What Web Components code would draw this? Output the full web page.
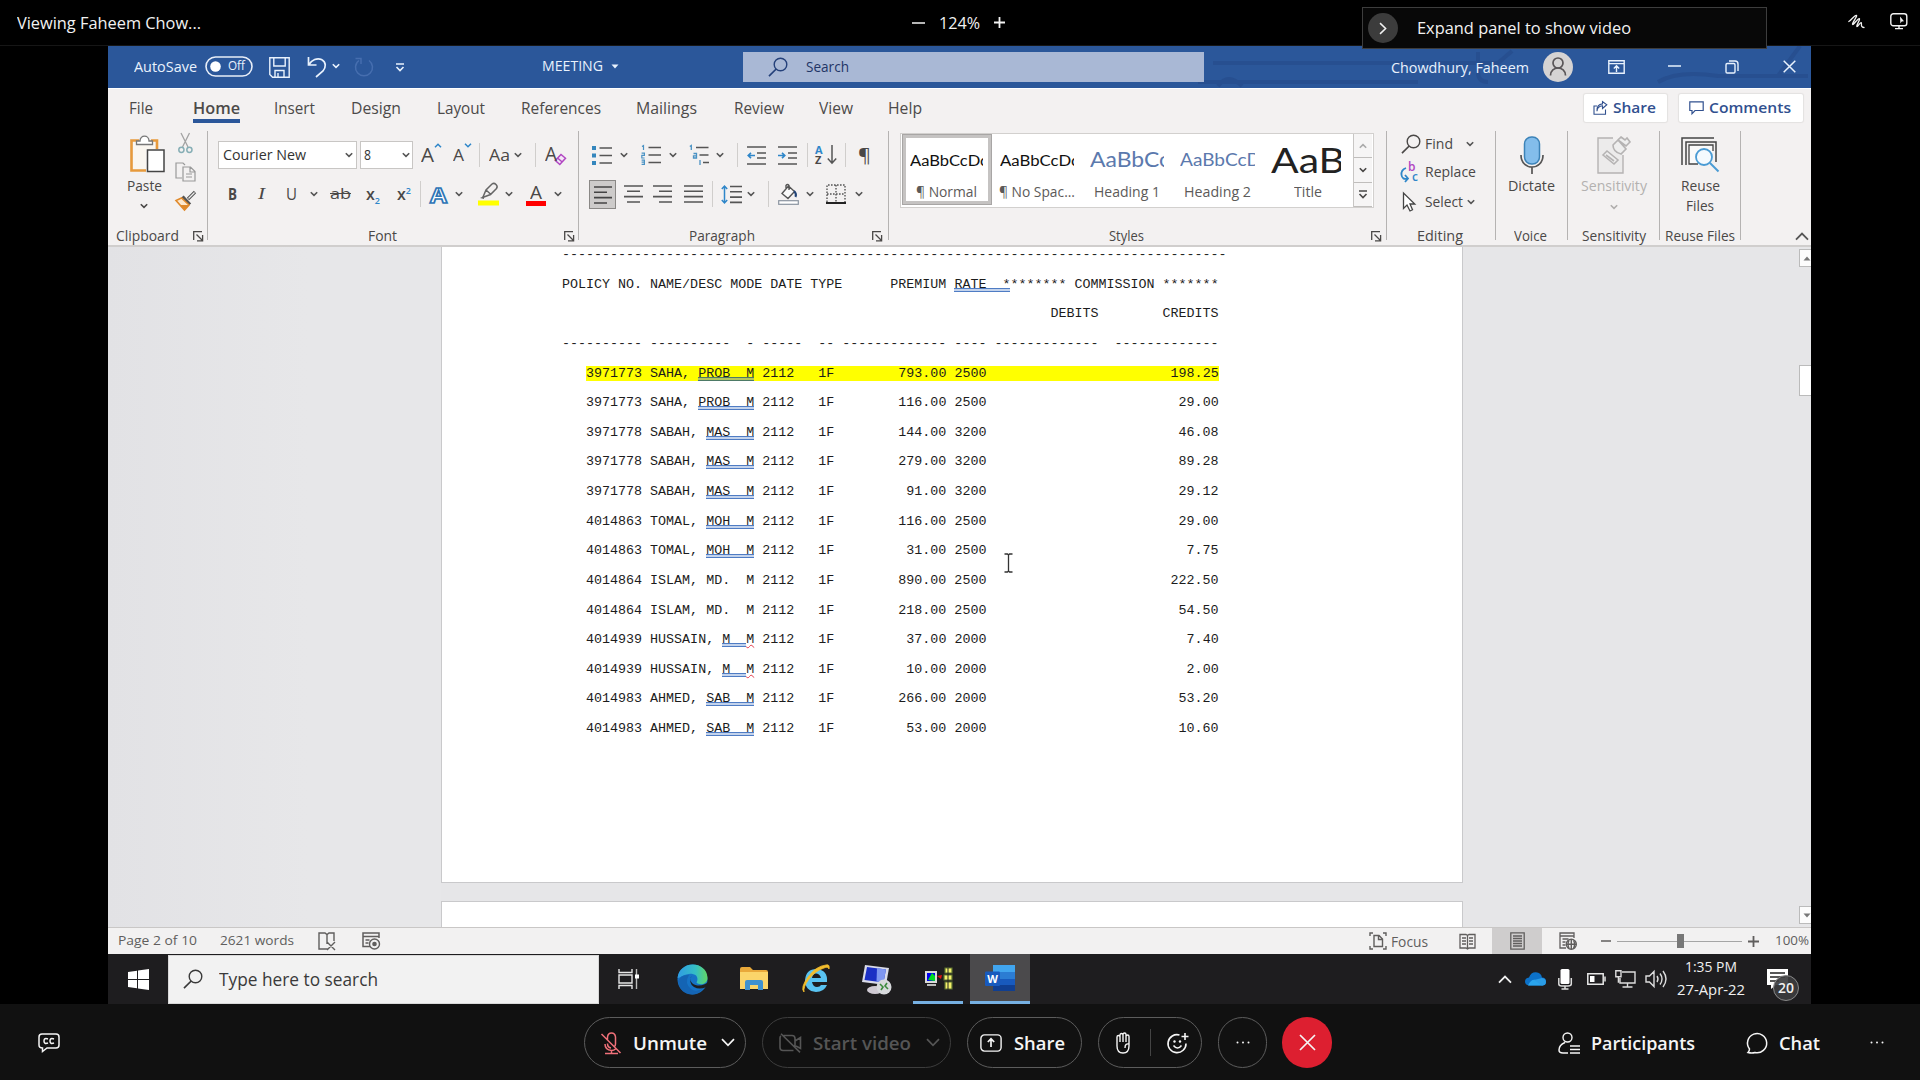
<!DOCTYPE html>
<html lang="en">
<head>
<meta charset="utf-8">
<title>Meeting</title>
<style>
html,body{margin:0;padding:0;background:#000;width:1920px;height:1080px;overflow:hidden}
body{font-family:"Open Sans","Noto Sans",sans-serif}
</style>
</head>
<body>
<meeting-app></meeting-app>
<script>
/* Text run whose glyphs are condensed or expanded to a given width */
class FitText extends HTMLElement{
  connectedCallback(){
    if(this.shadowRoot)return;
    const w=+this.getAttribute('w');
    const r=this.attachShadow({mode:'open'});
    r.innerHTML=`<style>:host{display:block;width:${w}px;flex:none;white-space:pre;line-height:1.3}
      span{display:inline-block;transform-origin:0 50%;white-space:pre}</style><span><slot></slot></span>`;
    const s=r.querySelector('span'),n=s.getBoundingClientRect().width;
    if(n>0)s.style.transform=`scaleX(${w/n})`;
  }
}
customElements.define('fit-text',FitText);

const S='fill="none" stroke="currentColor" stroke-width="1.4"';
const ICONS={
chev:[8,6,`<path d="M.8 1.2 4 4.4 7.2 1.2" fill="none" stroke="currentColor" stroke-width="1.6"/>`],
chevBig:[14,9,`<path d="M1 1.2 7 7.4 13 1.2" fill="none" stroke="currentColor" stroke-width="1.7"/>`],
up:[14,9,`<path d="M1 7.6 7 1.6 13 7.6" fill="none" stroke="currentColor" stroke-width="1.8"/>`],
launch:[11,11,`<path d="M.7 9V.7H9M3.5 3.5 9 9M9.6 4v5.8H4" fill="none" stroke="currentColor" stroke-width="1.3"/>`],
scribble:[17,16,`<path d="M.8 7.500C3.500 6 6.500 1 8.300 1.300S4 8.800 4.500 10.300 10 4 11.300 4.600 8.300 11 8.800 12.300 12.300 8 13.200 8.600 12 13.500 16 13.500" fill="none" stroke="currentColor" stroke-width="1.300" stroke-linecap="round"/>`],
screen:[18,17,`<rect x=".8" y=".8" width="16" height="12" rx="2.6" ${S}/><path d="M5 15.6h8M9 13v3" ${S}/><path d="M10 3.500l4 4.800-2.300.2L10.400 10.500z" fill="currentColor"/>`],
toggle:[48,21,`<rect x="1" y="1" width="46" height="19" rx="9.500" fill="none" stroke="#e8eef8" stroke-width="1.6"/><circle cx="10.500" cy="10.500" r="5.300" fill="#fff"/>`],
save:[21,21,`<path d="M.8.8h19.400v19.400H3.600L.8 17.400zM4.800.8v8.200h11.400V.8M6 20v-6.500h9V20M9 20v-4" ${S}/>`],
undo:[20,22,`<path d="M1.500 1v8h8M2 8.500C5 4 10 1.500 14.500 3.500c5 2.500 4.500 8 1.500 11.500L9 21" fill="none" stroke="currentColor" stroke-width="1.700"/>`],
redo:[20,21,`<path d="M5 3.500A8.500 8.500 0 1 0 15 3.500M1.500 1.500H7V7" fill="none" stroke="currentColor" stroke-width="1.500"/>`],
custom:[10,9,`<path d="M1 1h8M1.500 4l3.500 3.500L8.500 4" fill="none" stroke="currentColor" stroke-width="1.600"/>`],
caret:[8,5,`<path d="M.5.5h7L4 4.500z" fill="currentColor"/>`],
mag:[20,20,`<circle cx="12.500" cy="7.500" r="6.300" ${S}/><path d="M8.200 12 1 19.200" fill="none" stroke="currentColor" stroke-width="1.700"/>`],
avatar:[30,30,`<circle cx="15" cy="15" r="15" fill="#d5d3d3"/><circle cx="15" cy="11" r="5" fill="none" stroke="#5a5658" stroke-width="1.700"/><path d="M7.500 23.500c0-10 15-10 15 0" fill="none" stroke="#5a5658" stroke-width="1.700"/>`],
ribopt:[17,14,`<path d="M.8.8h15.400v12.400H.8zM.8 3.600h15.400M8.500 12V6M5.800 8.400l2.700-2.600 2.700 2.600" ${S}/>`],
min:[13,2,`<path d="M0 1h13" stroke="currentColor" stroke-width="1.500"/>`],
restore:[14,14,`<rect x="1" y="3.500" width="9" height="9.500" rx="1.200" ${S}/><path d="M4 1h6q3 0 3 3v7" ${S}/>`],
close:[13,13,`<path d="M.7.7l11.600 11.600M12.300.7.7 12.300" fill="none" stroke="currentColor" stroke-width="1.500"/>`],
closeBig:[17,17,`<path d="M1 1l15 15M16 1 1 16" fill="none" stroke="currentColor" stroke-width="1.700"/>`],
share:[15,14,`<path d="M4 5H1v8.300h11.500V8.500M4 10.200C4.300 6.600 6.500 5 9.500 4.800V7.500L13.800 3.700 9.500.6v2.300C5 3.200 3.800 6.600 4 10.200z" fill="none" stroke="currentColor" stroke-width="1.100"/>`],
comment:[15,14,`<path d="M.8.8h13.400v8.700H6l-3 3.300V9.500H.8z" fill="none" stroke="currentColor" stroke-width="1.200"/>`],
paste:[36,38,`<path d="M9 5.500H1.500v30H16M21 5.500h6V14" fill="none" stroke="#e79a3c" stroke-width="2.600"/><path d="M3 7h22v7h-9v20H3z" fill="#faf6f0"/><path d="M6.500 9.500V6H10C10 -.5 19 -.5 19 6h3.500v3.500z" fill="#fff" stroke="#777" stroke-width="1.300"/><rect x="17.500" y="15" width="16.500" height="21.500" fill="#fff" stroke="#444" stroke-width="1.500"/>`],
cut:[15,22,`<path d="M3 1l7 14M11.500 1 4.500 15" stroke="#a3a3a3" stroke-width="1.300" fill="none"/><circle cx="3.400" cy="17.800" r="2.600" fill="none" stroke="#86aeb5" stroke-width="1.500"/><circle cx="11.400" cy="17.800" r="2.600" fill="none" stroke="#86aeb5" stroke-width="1.500"/>`],
copy:[21,20,`<path d="M7 16H1V1h7l2 2M8 5h7.500L20 9.500V19H8zM15 5v5h5M11 12h6M11 15h6" fill="none" stroke="#999" stroke-width="1.200"/>`],
brush:[21,20,`<path d="M20 1l-7 7M7.500 5.500l7.500 8" stroke="#555" stroke-width="3.200"/><path d="M19.500 1.500l-6 6" stroke="#eee" stroke-width="1.200"/><path d="M6.500 7 1 9.500l8.500 9.500 4.500-5z" fill="#fde9cf" stroke="#e08a2c" stroke-width="1.600"/><path d="M5 14l4.500 5L14 14z" fill="#e08a2c"/>`],
grow:[8,5,`<path d="M1 4.200l3-3 3 3" fill="none" stroke="#2e86c9" stroke-width="1.500"/>`],
shrink:[8,5,`<path d="M1 .8l3 3 3-3" fill="none" stroke="#2e86c9" stroke-width="1.500"/>`],
eraser:[13,13,`<path d="M1.300 7.500 7 1.500l4.500 3.800-5.700 6.200zM3.500 5l4.700 4" fill="#f3e6f6" stroke="#b146c2" stroke-width="1.500"/>`],
hl:[21,24,`<path d="M5 15l3-7 6-6q2-1.500 4 .5t.5 4l-6 6L6 15zM8 8l5 4.500" fill="none" stroke="#666" stroke-width="1.500"/><path d="M2 16l4-2v3z" fill="#666"/><path d="M0 18.500h21v5H0z" fill="#ff0"/>`],
bullets:[20,19,`<path d="M0 0h4v4H0zM0 7.500h4v4H0zM0 15h4v4H0z" fill="#3486bd"/><path d="M7.500 2H20M7.500 9.500H20M7.500 17H20" stroke="#555" stroke-width="1.600"/>`],
numbers:[20,20,`<g fill="none" stroke="#4a92c4" stroke-width="1.200"><path d="M1 1.500l1.500-1V5M.6 8.100h2.800v2.200H.8V13h2.800M.6 15.200h2.800v4.200H.6m0-2.200h2.800"/></g><path d="M7.500 2.500H20M7.500 10H20M7.500 17.500H20" stroke="#555" stroke-width="1.600"/>`],
multi:[20,20,`<g fill="none" stroke="#4a92c4" stroke-width="1.300"><path d="M.8 1.500l1.500-1V5M4.500 8.500h3V13h-3v-2.200h3M11 15v5"/></g><path d="M7 2.500h12.500M10.500 10h9M14 17.500h6" stroke="#555" stroke-width="1.600"/>`],
outdent:[19,19,`<path d="M0 1h19M10 7h9M10 12h9M0 18h19" stroke="#555" stroke-width="1.600"/><path d="M8 9.500H1.500M4 6.800 1.200 9.500 4 12.200" fill="none" stroke="#2e86c9" stroke-width="1.600"/>`],
indent:[19,19,`<path d="M0 1h19M10 7h9M10 12h9M0 18h19" stroke="#555" stroke-width="1.600"/><path d="M0 9.500h6.500M4 6.800l2.800 2.700L4 12.200" fill="none" stroke="#2e86c9" stroke-width="1.600"/>`],
down:[10,20,`<path d="M5 0v18M.8 13.500 5 18.200l4.200-4.700" fill="none" stroke="#555" stroke-width="1.500"/>`],
al:[19,18,`<path d="M0 1h18M0 6.300h13M0 11.600h18M0 17h13" stroke="#444" stroke-width="1.600"/>`],
ac:[19,18,`<path d="M0 1h19M3 6.300h13M0 11.600h19M3 17h13" stroke="#555" stroke-width="1.600"/>`],
ar:[19,18,`<path d="M0 1h19M6 6.300h13M0 11.600h19M6 17h13" stroke="#555" stroke-width="1.600"/>`],
aj:[19,18,`<path d="M0 1h19M0 6.300h19M0 11.600h19M0 17h19" stroke="#555" stroke-width="1.600"/>`],
spacing:[21,19,`<path d="M9 1.500h12M9 6.800h12M9 12.100h12M9 17.400h12" stroke="#555" stroke-width="1.600"/><path d="M3.500 1v17M.8 4l2.700-3 2.700 3M.8 15l2.700 3 2.700-3" fill="none" stroke="#2e86c9" stroke-width="1.500"/>`],
shade:[21,21,`<path d="M4 9.500 10.500 2l6 5.500-6.500 7zM8 5V1.500q1.500-2 3 0V6" fill="#fafafa" stroke="#555" stroke-width="1.400"/><path d="M16 7q3 3 1.500 6" fill="none" stroke="#247" stroke-width="2"/><rect x=".7" y="16.700" width="19.600" height="3.600" fill="#fff" stroke="#8a94a0" stroke-width="1.200"/>`],
borders:[20,20,`<path d="M1 18V1h18v17M10 1v17M1 10h18" fill="none" stroke="#555" stroke-width="1.400" stroke-dasharray="1.600 1.400"/><path d="M0 19h20" stroke="#222" stroke-width="2"/>`],
replace:[19,20,`<path d="M6 5Q.8 7 1.500 12t6 3.500M5 12l3 3.500L5 19" fill="none" stroke="#2e86c9" stroke-width="1.800"/>`],
arrow:[14,20,`<path d="M1.500 1v15.500L5 13l3 6 2.500-1.200L8 12h4.800z" fill="#fff" stroke="#444" stroke-width="1.300"/>`],
mic:[24,38,`<rect x="4.500" y="1" width="15" height="27" rx="7" fill="#83bdeb" stroke="#3c83b8" stroke-width="1.500"/><path d="M1 19c0 16 22 16 22 0M12 31v7" fill="none" stroke="#555" stroke-width="1.700"/>`],
sens:[34,38,`<path d="M16 2H1v35h25V19" fill="#ecebeb" stroke="#b5b3b3" stroke-width="1.400"/><path d="M6 19l4-4 11 9-4 4zM9 19l8 6M16 9l5-5 8 9-5 5q-8-2-8-9zM24 1l4 3 2-2 3 4-4 4-8-6z" fill="#eee" stroke="#b5b3b3" stroke-width="1.600"/>`],
reuse:[38,36,`<path d="M1 28V1h32M5 28V5h30v20" fill="none" stroke="#444" stroke-width="1.500"/><path d="M17 27H8V8h24v6" fill="#fafafa" stroke="#444" stroke-width="1.300"/><circle cx="23" cy="20" r="8" fill="#f5fafe" stroke="#4a9bd4" stroke-width="1.800"/><path d="M29 26l8.500 8.500" stroke="#4a9bd4" stroke-width="2"/>`],
proof:[18,18,`<path d="M10 17H1V1h6l2 1.500L11 1h5v8M9 2v10M9 10l8 8M17 10l-8 8" ${S}/>`],
macro:[18,18,`<path d="M8 14.500H1V1h16v5M1 4.500h16M3.500 8h4M3.500 11h3" fill="none" stroke="currentColor" stroke-width="1.500"/><circle cx="12.500" cy="12" r="5" ${S}/><circle cx="12.500" cy="12" r="2.300" fill="currentColor"/>`],
focus:[18,18,`<path d="M4 1H1v3M14 1h3v3M1 14v3h3M17 14v3h-3M5 3.500h5l3.500 3.500v7.500H5zM9.500 3.500V7.500h4" ${S}/>`],
book:[17,17,`<path d="M8.500 2v14M1 1.500h6l1.500 1L10 1.500h6v13.500h-6l-1.500 1-1.500-1H1zM3 5h4M3 8h4M3 11h4M10 5h4M10 8h4M10 11h4" fill="none" stroke="currentColor" stroke-width="1.300"/>`],
page:[15,18,`<path d="M.8.8h13.400v16.400H.8zM3 4h9M3 6.500h9M3 9h9M3 11.500h9M3 14h9" fill="none" stroke="currentColor" stroke-width="1.300"/>`],
web:[18,18,`<path d="M7 16H1V1h14v5M1 4h14M3.500 7h6M3.500 10h3M3.500 13h3" fill="none" stroke="currentColor" stroke-width="1.300"/><circle cx="12.300" cy="12.300" r="5" ${S}/><path d="M7.300 12.300h10M12.300 7.300v10M10 8.500q-2 4 0 7.600M14.600 8.500q2 4 0 7.600" ${S}/>`],
plus:[11,11,`<path d="M5.500 0v11M0 5.500h11" stroke="currentColor" stroke-width="1.800"/>`],
win:[21,21,`<path d="M0 3l9-1.300V10H0zM10 1.500 21 0v10H10zM0 11h9v8.300L0 18zM10 11h11v10l-11-1.500z" fill="#fff"/>`],
task:[22,20,`<path d="M1 0v3.500h13V0M1 20v-3.500h13V20M1 6h13v8H1z" fill="none" stroke="#e6e6e6" stroke-width="1.400"/><path d="M18.500 0v20" stroke="#bbb" stroke-width="1.400"/><path d="M17 5.500h4v4h-4z" fill="#fff"/>`],
edge:[31,31,`<defs><linearGradient id="g" x1="0" x2="1"><stop offset="0" stop-color="#2f9be4"/><stop offset=".6" stop-color="#35bfc4"/><stop offset="1" stop-color="#62d664"/></linearGradient></defs><circle cx="15.500" cy="15.500" r="15" fill="#1673c6"/><path d="M.6 14C2-4 30-4 30.500 14c0 7-9 7.500-11 4.500 2-3 1-8-4-8.500C8 9 4 14 .6 14z" fill="url(#g)"/><path d="M12 11q-5 8 2 14 5 3.500 12-.5-4 6-11 6Q3 30 1 17q3-7 11-6z" fill="#1464b4"/><path d="M14.500 12c-2.500 4 0 9 6 9.500 4.500.3 8-1 10.500-3.500l-1.500 5q-7 3-12.500 0-6-4-2.500-11z" fill="#1e1e20"/>`],
folder:[28,24,`<path d="M0 2q0-2 2-2h8l3 3h13q2 0 2 2v17H0z" fill="#e9a93a"/><path d="M0 5h28v17H0z" fill="#fbd56a"/><path d="M5 23v-8q0-2 2-2h14q2 0 2 2v8h-5v-5h-8v5z" fill="#3f92cf"/>`],
ie:[30,30,`<path d="M26 21q-3 7-11 7Q4 27 4 16 5 5 15.500 5 27 6 26 18H11q1 5 5 5 3 0 4-2zM11 14h9q-1-4-4.500-4.500T11 14z" fill="#59c3f1"/><path d="M3 28Q-1 24 7 13T25 1q4-1 3 4-1-3-5-1Q14 7 8 15T3 28z" fill="#f2bd2d" stroke="#f2bd2d" stroke-width=".8"/>`],
rdp:[30,31,`<path d="M3 1l24 3-3 17-24-3z" fill="#d9dbe8"/><path d="M5 3l19 2.500-2.500 13L2.500 16z" fill="#1b2fc4"/><path d="M15 4l9 1.500-2.500 13-7-1z" fill="#7e96f0"/><ellipse cx="13" cy="26" rx="8" ry="4" fill="#cfc9d2"/><circle cx="22" cy="23" r="7.500" fill="#d7d9dc"/><path d="M18 20l3 3-2 3M25 19l-2 3 3 3" stroke="#3c8a3c" stroke-width="1.600" fill="none"/>`],
term:[29,24,`<path d="M1 4h12v12H1z" fill="#d9d9d9"/><path d="M3 6h8v8H3z" fill="#00e"/><path d="M4 13l4-7 3 3v5z" fill="#0d2"/><path d="M3 17h9v2H3z" fill="#bbb"/><path d="M13 9l5-1-1 4z" fill="#e01010"/><g fill="#f4f06a" stroke="#5a7030" stroke-width="1.200"><path d="M21 1h7v5h-7zM20 8h8v5h-8zM21 15h7v7h-7z"/></g><path d="M24 1v22" stroke="#222" stroke-width="1"/>`],
word:[30,27,`<path d="M8 0h22v7H8z" fill="#41a5ee"/><path d="M8 7h22v7H8z" fill="#2b7cd3"/><path d="M8 14h22v6H8z" fill="#185abd"/><path d="M8 20h22v6H8z" fill="#103f91"/><rect y="6.500" width="15" height="14.500" rx="1.200" fill="#185abd"/>`],
cloud:[21,14,`<path d="M4 13.500q-4-.5-4-4T4 5.500Q6 0 11 .3t6 5.200q4 .2 4 4t-4 4z" fill="#0c71c8"/><path d="M3 13.500q3-7 8-5.500l7 5.500z" fill="#2aa4ec"/><path d="M9 8l8-2q4 .5 4 4t-4 3.500z" fill="#2a9ce6"/>`],
tmic:[14,21,`<rect x="2.500" width="9" height="15" rx="1.500" fill="#fff"/><path d="M.8 9v6q0 2 3 2h6q3.500 0 3.500-2V9M7 17v3M3.500 20h7" fill="none" stroke="#ddd" stroke-width="1.500"/>`],
bat:[19,12,`<path d="M.8.8h15.400v10.400H.8zM18 3.500v5" fill="none" stroke="#e6e6e6" stroke-width="1.500"/><path d="M3 3h4.500v6H3z" fill="#fff"/>`],
net:[21,18,`<path d="M7 2h13v11H5V8M12.500 13v4M7.500 17h10M.8.8H6v6H.8zM3.400 6.800v6" fill="none" stroke="#ddd" stroke-width="1.400"/>`],
vol:[22,18,`<path d="M1 6h3.500L9 1.500v15L4.500 12H1zM12 6q2 3 0 6M15 3.500q4 5.500 0 11M18 1q6 8 0 16" fill="none" stroke="#ddd" stroke-width="1.400"/>`],
notif:[21,20,`<path d="M0 0h21v16H9l-5 4v-4H0z" fill="#fff"/><path d="M3 4h15M3 8h15M3 12h9" stroke="#222" stroke-width="1.300"/>`],
cc:[22,20,`<path d="M4 1h14q3 0 3 3v8q0 3-3 3H9l-4.500 3.500V15Q1 15 1 12V4q0-3 3-3zM10 6Q6 4.500 6 8t4 2M16 6q-4-1.500-4 2t4 2" fill="none" stroke="currentColor" stroke-width="1.500"/>`],
mute:[22,24,`<path d="M7.500 10V6q.5-4 4-4t4 4v7q0 2-1.500 3M7.500 12.500q0 4 3.500 4.500M5 13q0 6 6.500 6.500 2.500 0 4-1.500M11.500 19.500V22M5 22.500h13M1.500 3l19 19" fill="none" stroke="#f0717a" stroke-width="1.500"/>`],
cam:[23,20,`<path d="M4.500 2.500H13q3 0 3 3v9M14.500 17.500H4q-3 0-3-3V5q0-1.500 1-2M16 8l5.500-3.500v11L17 13M2 .8l19 18.600" fill="none" stroke="currentColor" stroke-width="1.600"/>`],
shareUp:[22,18,`<rect x=".9" y=".9" width="20.200" height="16.200" rx="3.500" ${S}/><path d="M11 13V5M7.800 8 11 4.800 14.200 8" fill="none" stroke="currentColor" stroke-width="1.700"/>`],
hand:[16,22,`<path d="M2 12V5q0-1.500 1.500-1.500T5 5v5-7q0-1.500 1.500-1.500T8 3v7V2.500Q8 1 9.500 1T11 2.500V10 4.500Q11 3 12.500 3T14 4.500V14q0 7-6 7-6 0-6-7v-3M14 12q-4-1-4 4" fill="none" stroke="currentColor" stroke-width="1.400"/>`],
smile:[22,22,`<path d="M12.500 3A9 9 0 1 0 19 11.500M6.500 13.500q4 5 8 0" fill="none" stroke="currentColor" stroke-width="1.600"/><circle cx="7.500" cy="9.500" r="1.200" fill="currentColor"/><circle cx="13" cy="9.500" r="1.200" fill="currentColor"/><path d="M18 1v7M14.500 4.500h7" stroke="currentColor" stroke-width="1.600"/>`],
dots:[14,3,`<circle cx="1.500" cy="1.500" r="1" fill="currentColor"/><circle cx="7" cy="1.500" r="1" fill="currentColor"/><circle cx="12.500" cy="1.500" r="1" fill="currentColor"/>`],
people:[22,22,`<circle cx="9.500" cy="5.500" r="4.500" ${S}/><path d="M7 10.500Q1 13 1 18q0 3 4 3h5M12 14h10M12 17.500h10M12 21h10" fill="none" stroke="currentColor" stroke-width="1.500"/>`],
chat:[22,22,`<path d="M1 20.500q1.500-1.500 1.500-3.500A9.600 9.600 0 1 1 8 20.500Q5 21.500 1 20.500z" fill="none" stroke="currentColor" stroke-width="1.500"/>`],
ibeam:[9,20,`<path d="M.5 1H3.500L4.500 2 5.500 1h3M.5 19h3l1-1 1 1h3M4.500 2v16" fill="none" stroke="#333" stroke-width="1.300"/>`]
};
class UiIcon extends HTMLElement{
  connectedCallback(){
    if(this.shadowRoot)return;
    const [w,h,p]=ICONS[this.getAttribute('name')];
    this.attachShadow({mode:'open'}).innerHTML=`<style>:host{display:block;flex:none;width:${w}px;height:${h}px}svg{display:block;overflow:visible}</style><svg width="${w}" height="${h}" viewBox="0 0 ${w} ${h}">${p}</svg>`;
  }
}
customElements.define('ui-icon',UiIcon);

const I=(n,c)=>`<ui-icon name="${n}"${c?` style="color:${c}"`:''}></ui-icon>`;
const T=(s,w,size,style='')=>`<fit-text w="${w}" style="font-size:${size}px;${style}">${s}</fit-text>`;
const V=(h,c='#d0cecc')=>`<i style="display:block;width:1px;height:${h}px;background:${c}"></i>`;
/* Flex row: every entry is [start, width, markup, style]; the gaps become margins */
const row=(x0,h,items,style='')=>{
  let x=x0;
  return `<div style="display:flex;align-items:center;flex:none;height:${h}px;${style}">`+items.map(([s,w,m,st=''])=>{
    const g=s-x;x=s+w;
    return `<div style="flex:none;margin-left:${g}px;width:${w}px;${st}">${m}</div>`;}).join('')+'</div>';
};
const define=(name,css,html)=>customElements.define(name,class extends HTMLElement{
  connectedCallback(){ if(!this.shadowRoot)this.attachShadow({mode:'open'}).innerHTML=`<style>:host{display:block;box-sizing:border-box}*{box-sizing:border-box}${css}</style>${html}`; }
});
const chev=(x,c='#555',st='')=>[x,8,I('chev',c),st];

define('top-bar',`:host{height:46px;background:#000;color:#f2f2f2;border-bottom:1px solid #161616;position:relative}
.panel{position:absolute;left:1362px;top:7px;width:405px;height:42px;background:#080808;border:1px solid #3d3d3d;z-index:5}
.c{width:30px;height:30px;border-radius:50%;background:#3c3c3c;display:flex;align-items:center;justify-content:center}
.c ui-icon{transform:rotate(-90deg) scale(.9)}`,
row(0,45,[[17,184,T('Viewing Faheem Chow...',184,16.5)],[912,13,I('min')],[939,41,T('124%',41,16.5)],[994,11,I('plus')],[1848,17,I('scribble'),'margin-top:-2px'],[1890,18,I('screen'),'margin-top:-2px']])
+`<div class="panel">${row(1363,40,[[1368,30,`<div class="c">${I('chevBig')}</div>`],[1417,214,T('Expand panel to show video',214,16.5)]])}</div>`);

define('title-bar',`:host{height:42px;background:#2b579a;color:#e9f2fd;position:relative;overflow:hidden}
svg.d{position:absolute;left:1090px;top:0}
.s{height:30px;background:#a9b8d5;color:#1f3566}
.tg{position:relative}.tg fit-text{position:absolute;left:23px;top:2px}`,
`<svg class="d" width="613" height="42" fill="none" stroke="#264c8c" stroke-width="4" opacity=".7"><path d="M15 17H300l14-12M0 36h220M20 40q10-14 24 0M280 6v20q0 10 10 10M560 30h50M460 36q20-12 60-6h60l22-30"/></svg>`
+row(108,42,[[134,63,T('AutoSave',63,14)],[205,48,`<div class="tg">${I('toggle')}${T('Off',17,12.5)}</div>`,'margin-top:-2px'],[269,21,I('save')],[307,20,I('undo')],chev(332,'#e9f2fd','margin-top:-2px'),[354,20,I('redo','#466eaf')],[395,10,I('custom')],[542,61,T('MEETING',61,14),'margin-top:-2px'],[611,8,I('caret'),'margin-top:-2px'],
[743,461,`<div class="s">${row(743,30,[[768,20,I('mag','#24407a')],[806,43,T('Search',43,14.5)]])}</div>`],[1391,138,T('Chowdhury, Faheem',138,14.5),'margin-top:2px'],[1543,30,I('avatar')],[1608,17,I('ribopt')],[1668,13,I('min'),'margin-top:-2px'],[1725,14,I('restore'),'margin-top:-1px'],[1783,13,I('close'),'margin-top:-1px']],'position:relative'));

const tabs=[['File',129,24],['Home',193,47],['Insert',274,41],['Design',351,50],['Layout',437,48],['References',521,80],['Mailings',636,61],['Review',734,50],['View',819,34],['Help',888,34]];
define('ribbon-tabs',`:host{height:43px;color:#4c4a49}.on{height:43px;display:flex;align-items:center;background:linear-gradient(#2b579a,#2b579a) 0 30px/100% 4px no-repeat;padding-bottom:5px}
.b{height:28px;background:#fff;border-radius:2px;color:#31508f;box-shadow:0 0 1px 1px #e3e1e0}`,
row(108,43,[...tabs.map(([n,x,w])=>[x,w,n==='Home'?`<div class="on">${T(n,w,15.5,'font-weight:600')}</div>`:T(n,w,15.5),n==='Home'?'':'margin-top:-5px']),
[1584,83,`<div class="b">${row(1584,28,[[1593,15,I('share')],[1613,43,T('Share',43,15,'font-weight:600')]])}</div>`,'margin-top:-5px'],
[1679,124,`<div class="b">${row(1679,28,[[1689,15,I('comment')],[1709,82,T('Comments',82,15,'font-weight:600')]])}</div>`,'margin-top:-5px']]));

const grp='color:#4a4847;';
define('group-clipboard',`:host{width:99px;${grp}}.m{display:flex;height:95px}.p{width:59px;padding:4px 0 0 19px}.q{padding:1px 0 0 5px;display:flex;flex-direction:column;align-items:center;width:32px}`,
`<div class="m"><div class="p"><div style="margin-left:3px">${I('paste')}</div><div style="margin-top:4px">${T('Paste',35,14.5)}</div><div style="margin:7px 0 0 13px">${I('chev')}</div></div><div class="q">${I('cut')}<div style="margin:8px 0 9px">${I('copy')}</div>${I('brush')}</div></div>`+row(108,20,[[116,63,T('Clipboard',63,14)],[193,11,I('launch')]]));

define('group-font',`:host{width:370px;${grp}}.f{height:28px;background:#fff;border:1px solid #c8c6c4;color:#333}
.st{display:flex;align-items:flex-start}.o{-webkit-text-stroke:1.600px #2e75b6;color:#fff;font-weight:700}.ha{border-bottom:5px solid #f00}sub,sup{font-size:9px;line-height:0;color:#2e86c9;font-weight:600}
.x{font:600 16px/24px "Open Sans"}`,
row(208,48,[[218,139,`<div class="f">${row(219,26,[[223,83,T('Courier New',83,15)],chev(345)])}</div>`],[360,53,`<div class="f">${row(361,26,[[364,7,T('8',7,15)],chev(402)])}</div>`],
[421,20,`<div class="st">${T('A',13,20,'line-height:24px')}${I('grow')}</div>`],[453,18,`<div class="st">${T('A',11,17,'line-height:24px')}${I('shrink')}</div>`],[479,1,V(24)],[489,21,T('Aa',21,16.5)],chev(514),[535,1,V(24)],[545,22,`<div style="display:flex;align-items:flex-end">${T('A',12,20,'line-height:24px')}<div style="margin-left:-3px">${I('eraser')}</div></div>`,'margin-top:-2px']])
+row(208,30,[[228,9,T('B',9,16,'font-weight:700')],[258,8,T('I',7,17,'font-style:italic;font-family:Liberation Serif')],[286,11,T('U',11,16,'text-decoration:underline;text-underline-offset:3px')],chev(310),[330,21,T('<s>ab</s>',21,15)],[366,16,'<div class="x">x<sub>2</sub></div>'],[397,16,'<div class="x">x<sup>2</sup></div>'],[420,1,V(26)],[430,19,`<div class="o">${T('A',17,22,'line-height:26px')}</div>`],chev(455),[478,21,I('hl')],chev(505),[526,20,`<div class="ha">${T('A',12,18,'line-height:18px;margin-left:4px')}</div>`],chev(554)])
+row(208,20,[[368,29,T('Font',29,14)],[564,11,I('launch')]],'margin-top:17px'));

define('group-paragraph',`:host{width:309px;${grp}}.on{width:27px;height:29px;border:1px solid #8a8886;background:#cdcbca;padding:5px 0 0 4px}.az{display:flex;align-items:center}.z{font:700 11px/10px "Open Sans"}`,
row(579,48,[[592,20,I('bullets')],chev(620),[641,20,I('numbers')],chev(669),[689,20,I('multi')],chev(716),[737,1,V(24)],[747,19,I('outdent')],[778,19,I('indent')],[807,1,V(24)],[815,22,`<div class="az"><div class="z"><span style="color:#2e86c9">A</span><br>Z</div><div style="margin-left:4px">${I('down')}</div></div>`],[845,1,V(24)],[858,13,T('¶',13,19)]])
+row(579,30,[[589,27,`<div class="on">${I('al')}</div>`],[624,19,I('ac')],[653,19,I('ar')],[684,19,I('aj')],[712,1,V(26)],[721,21,I('spacing')],chev(747),[768,1,V(26)],[778,21,I('shade')],chev(806),[826,20,I('borders')],chev(855)])
+row(579,20,[[689,66,T('Paragraph',66,14)],[872,11,I('launch')]],'margin-top:17px'));

/* Gallery tile; the sample is cut off at its own box, the name sits under it */
const cell=(x,w,[s,sx,vis],sw,size,c,name,nx,nw,on)=>{
  const o=on?4:0;
  return [x,w,`<div class="c${on?' on':''}"><div style="color:${c};font-family:Lato">${row(x+o,42,[[sx,vis,T(s,sw,size),'overflow:hidden']])}</div>${row(x+o,22,[[nx,nw,T(name,nw,14,'color:#5c5a59')]])}</div>`];};
define('group-styles',`:host{width:497px;${grp}}.g{margin:2px 0 0 11px;width:474px;height:75px;border:1px solid #d2d0ce;background:#fff;display:flex}
.c{height:73px;padding-top:5px}.on{border:4px solid #c5c3c2;outline:1px solid #a8a6a5;outline-offset:-1px;height:71px;margin-top:-2px;padding-top:1px}
.b{width:19px;height:73px;display:flex;flex-direction:column;border-left:1px solid #c8c6c4;background:#f6f5f5}.b div{flex:1;display:flex;align-items:center;justify-content:center;border-bottom:1px solid #c0bebc}`,
`<div class="g">${row(901,73,[
cell(902,90,['AaBbCcDc',910,73],78,15.5,'#111','¶ Normal',916,61,1),
cell(992,90,['AaBbCcDc',1000,74],79,15.5,'#111','¶ No Spac...',999,76),
cell(1082,90,['AaBbCc',1090,74],80,21.5,'#5b79ad','Heading 1',1094,66),
cell(1172,90,['AaBbCcD',1180,75],81,17.5,'#5b79ad','Heading 2',1184,67),
cell(1262,91,['AaB',1271,70],74,34,'#222','Title',1294,28)])}<div class="b"><div><ui-icon name="chev" style="color:#aaa;transform:scaleY(-1)"></ui-icon></div><div>${I('chev')}</div><div>${I('custom')}</div></div></div>`
+row(889,20,[[1109,35,T('Styles',35,14)],[1371,11,I('launch')]],'margin-top:18px'));

define('group-editing',`:host{width:108px;${grp}}.r{position:relative}.r span{position:absolute;font:600 12px/12px "Open Sans"}`,
row(1387,26,[[1401,20,I('mag')],[1425,28,T('Find',28,14.5)],chev(1466)])
+row(1387,31,[[1400,19,`<div class="r">${I('replace')}<span style="left:8px;top:-2px;color:#b146c2">b</span><span style="left:12px;top:8px;color:#2e86c9">c</span></div>`],[1425,51,T('Replace',51,14.5)]])
+row(1387,28,[[1402,14,I('arrow')],[1425,38,T('Select',38,14.5)],chev(1467)])
+row(1387,20,[[1417,46,T('Editing',46,14)]],'margin-top:10px'));

const big=(name,w,icon,lines,label,lx,x0)=>define(name,`:host{width:${w}px;${grp}}.m{height:95px;padding-top:2px;display:flex;flex-direction:column;align-items:center}.n>*{margin-bottom:1px}`,
`<div class="m"><div style="height:44px;display:flex;align-items:center">${I(icon)}</div>${lines}</div>`+row(x0,20,[[lx[0],lx[1],T(label,lx[1],14)]]));
big('group-voice',71,'mic',T('Dictate',47,14.5),'Voice',[1514,33],1496);
big('group-sensitivity',91,'sens',T('Sensitivity',66,14.5,'color:#b3b1b0')+`<div style="margin-top:8px">${I('chev','#b0aead')}</div>`,'Sensitivity',[1582,64],1568);
big('group-reuse',80,'reuse',T('Reuse',39,14.5)+T('Files',28,14.5,'margin-top:1px'),'Reuse Files',[1665,70],1660);
define('ribbon-bar',`:host{height:159px;background:#f3f1f1;border-top:1px solid #fff;border-bottom:2px solid #d0cecd}.g{display:flex;height:115px;margin-top:-1px}.v{width:1px;height:109px;background:#b5b3b2;flex:none}.g>*{flex:none}.g .e{flex:1;display:flex;align-items:flex-end;justify-content:flex-end;padding:0 2px 5px;color:#555}`,
`<ribbon-tabs></ribbon-tabs><div class="g">${['clipboard','font','paragraph','styles','editing','voice','sensitivity','reuse'].map(n=>`<group-${n}></group-${n}><div class="v"></div>`).join('')}<div class="e">${I('up')}</div></div>`);

/* Statement report: [policy, name, flagged part, amount, rate, credit] */
const data=[['3971773','SAHA, ','PROB','793.00','2500','198.25'],['3971773','SAHA, ','PROB','116.00','2500','29.00'],['3971778','SABAH, ','MAS','144.00','3200','46.08'],['3971778','SABAH, ','MAS','279.00','3200','89.28'],['3971778','SABAH, ','MAS','91.00','3200','29.12'],['4014863','TOMAL, ','MOH','116.00','2500','29.00'],['4014863','TOMAL, ','MOH','31.00','2500','7.75'],['4014864','ISLAM, MD.','','890.00','2500','222.50'],['4014864','ISLAM, MD.','','218.00','2500','54.50'],['4014939','HUSSAIN, ','M','37.00','2000','7.40'],['4014939','HUSSAIN, ','M','10.00','2000','2.00'],['4014983','AHMED, ','SAB','266.00','2000','53.20'],['4014983','AHMED, ','SAB','53.00','2000','10.60']];
const sp=n=>' '.repeat(n),d=n=>'-'.repeat(n);
const lines=[d(83),'POLICY NO. NAME/DESC MODE DATE TYPE'+sp(6)+'PREMIUM <u>RATE  *</u>******* COMMISSION *******',sp(61)+'DEBITS'+sp(8)+'CREDITS',
d(10)+' '+d(10)+sp(2)+'-'+' '+d(5)+sp(2)+d(2)+' '+d(13)+' '+d(4)+' '+d(13)+sp(2)+d(13),
...data.map(([p,n,f,a,r,c],i)=>{
  const m=!f?sp(2)+'M':f==='M'?'<u>M  </u><em>M</em>':`<u>${f}  M</u>`;
  const b=`${p} ${n}${m} 2112${sp(3)}1F${a.padStart(14)} ${r}${c.padStart(29)}`;
  return sp(3)+(i?b:`<mark>${b}</mark>`);
})];
define('doc-view',`:host{height:680px;background:#e6e6e8;display:flex;overflow:hidden}
.l{width:333px;flex:none;background:linear-gradient(90deg,#e2e2e5,#e7e7e9 60%)}.pages{width:1022px;flex:none}.pg{background:#fff;border:1px solid #c9c9cb;border-top:0;height:636px;overflow:hidden;position:relative}.pg2{height:40px;margin-top:18px;border-top:1px solid #c9c9cb}
.txt{margin:-7px 0 0 120px;font:13.350px/29.630px "Liberation Mono",monospace;color:#1c1c1c}.txt div{white-space:pre;height:29.630px}
u{text-decoration:none;background:linear-gradient(#4f7cc4 0 1px,#c3d3ec 1px 3px,#4f7cc4 3px 4px) 0 100%/100% 4px no-repeat}
em{font-style:normal;text-decoration:underline wavy #e33a4b 1px;text-underline-offset:1px}
mark{background:#ff0;color:inherit}mark u{background:linear-gradient(#4d7a66 0 1px,#b5c65c 1px 3px,#4d7a66 3px 4px) 0 100%/100% 4px no-repeat}
.cur{position:absolute;left:562px;top:306px}
.sb{margin-left:auto;width:12px;display:flex;flex-direction:column;padding:2px 0 3px}.a{height:18px;border:1px solid #bbb;border-right:0;background:#fcfcfc;display:flex;align-items:center;justify-content:flex-end;color:#777}.th{height:31px;border:1px solid #bbb;border-right:0;background:#fff;margin-top:98px}.sb .a:last-child{margin-top:auto}`,
`<div class="l"></div><div class="pages"><div class="pg"><div class="txt">${lines.map(l=>`<div>${l}</div>`).join('')}</div><div class="cur">${I('ibeam')}</div></div><div class="pg pg2"></div></div>
<div class="sb"><div class="a"><ui-icon name="caret" style="transform:scaleY(-1)"></ui-icon></div><div class="th"></div><div class="a">${I('caret')}</div></div>`);

define('status-bar',`:host{height:27px;background:#f2f1f1;border-top:1px solid #c9c7c6;color:#605e5d}.on{height:26px;background:#cfcdcd;display:flex;align-items:center;justify-content:center}.ln{height:1px;background:#a5a5a5;position:relative}.ln i{position:absolute;left:60px;top:-7px;width:7px;height:14px;background:#777}`,
row(108,26,[[118,79,T('Page 2 of 10',79,13.5)],[220,74,T('2621 words',74,13.5)],[318,18,I('proof')],[362,18,I('macro')],[1369,18,I('focus')],[1391,37,T('Focus',37,14),'margin-top:2px'],[1459,17,I('book')],[1492,50,`<div class="on">${I('page')}</div>`],[1559,18,I('web')],[1601,10,I('min'),'overflow:hidden'],[1617,125,'<div class="ln"><i></i></div>'],[1748,11,I('plus')],[1775,34,T('100%',34,13.5)]]));

define('task-bar',`:host{height:50px;background:#1e1d1f;color:#f0f0f0}.s{height:49px;background:#f2f2f2;color:#3a3a3a;border:1px solid #d8d8d8}.u{height:50px;border-bottom:3px solid #76b0e2;display:flex;align-items:center;justify-content:center;padding-top:2px}.w{background:#4b4a4c}.wi{position:relative}.wi span{position:absolute;left:1px;top:7px;width:13px;text-align:center;font:700 11px/13px "Open Sans";color:#fff}
.n{position:relative;height:20px}.n b{position:absolute;left:6px;top:6px;width:26px;height:26px;border-radius:50%;background:rgba(60,60,62,.92);border:1px solid #888;font:600 14px/23px "Open Sans";text-align:center}`,
row(108,50,[[128,21,I('win')],[168,431,`<div class="s">${row(169,47,[[183,20,I('mag')],[219,159,T('Type here to search',159,18),'margin-top:2px']])}</div>`],[618,22,I('task')],[677,31,I('edge')],[740,28,I('folder')],[801,30,I('ie')],[862,30,I('rdp')],[913,50,`<div class="u">${I('term')}</div>`],[970,60,`<div class="u w"><div class="wi">${I('word')}<span>W</span></div></div>`],
[1498,14,I('up')],[1525,21,I('cloud')],[1558,14,I('tmic')],[1587,19,I('bat')],[1615,21,I('net')],[1645,22,I('vol')],
[1677,68,`<div style="padding-left:8px;height:23px">${T('1:35 PM',52,14.5)}</div>${T('27-Apr-22',68,14.5)}`],[1767,21,`<div class="n">${I('notif')}<b>20</b></div>`]]));

const W='font-weight:600;margin-top:2px';
define('meeting-controls',`:host{height:76px;background:#111;color:#f5f5f5}.b{height:51px;border:1px solid #5c5c5c;border-radius:26px}.off{color:#555;border-color:#3d3d3d}.c{display:flex;align-items:center;justify-content:center}.red{background:#dd1f30;border:0}`,
row(0,76,[[38,22,I('cc')],
[584,162,`<div class="b">${row(585,49,[[600,22,I('mute')],[633,74,T('Unmute',74,18,W)],[721,14,I('chevBig')]])}</div>`],
[762,189,`<div class="b off">${row(763,49,[[779,23,I('cam')],[813,98,T('Start video',98,18,W)],[926,14,I('chevBig')]])}</div>`],
[967,115,`<div class="b">${row(968,49,[[980,22,I('shareUp')],[1014,51,T('Share',51,18,W)]])}</div>`],
[1098,104,`<div class="b">${row(1099,49,[[1115,16,I('hand')],[1150,1,V(27,'#444')],[1167,22,I('smile')]])}</div>`],
[1218,49,`<div class="b c">${I('dots')}</div>`],[1282,50,`<div class="b c red">${I('closeBig')}</div>`],
[1558,22,I('people')],[1591,104,T('Participants',104,18,W)],[1747,22,I('chat')],[1779,41,T('Chat',41,18,W)],[1870,14,I('dots')]],'padding-top:1px'));

define('shared-screen',`:host{width:1703px;height:958px;margin-left:108px;display:flex;flex-direction:column;overflow:hidden}:host>*{flex:none}`,
`<title-bar></title-bar><ribbon-bar></ribbon-bar><doc-view></doc-view><status-bar></status-bar><task-bar></task-bar>`);
define('meeting-app',`:host{width:1920px;height:1080px;overflow:hidden}`,`<top-bar></top-bar><shared-screen></shared-screen><meeting-controls></meeting-controls>`);
</script>
</body>
</html>
